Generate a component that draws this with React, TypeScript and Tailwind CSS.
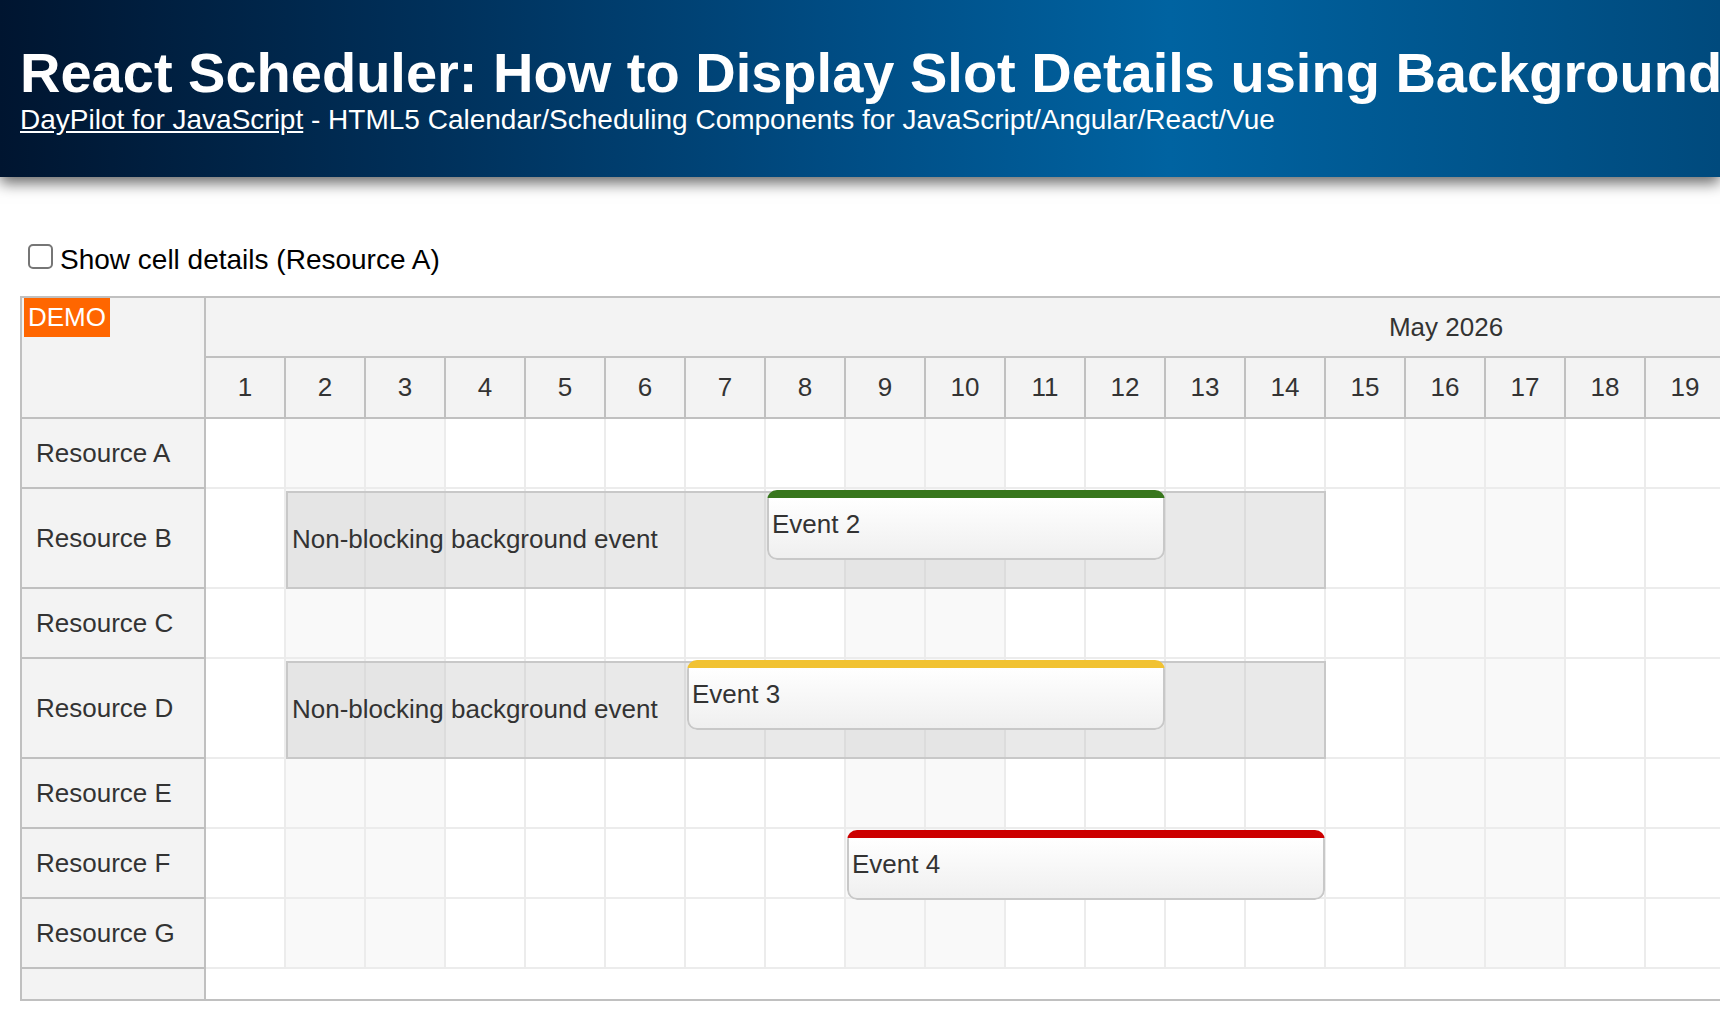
import React from "react";

const DAYS = Array.from({ length: 31 }, (_, i) => i + 1);
const WEEKEND = new Set([2, 3, 9, 10, 16, 17, 23, 24, 30, 31]);

type Ev = { start: number; days: number; color: string; text: string };
type Row = { name: string; h: number; bg?: boolean; ev?: Ev };

const ROWS: Row[] = [
  { name: "Resource A", h: 70 },
  { name: "Resource B", h: 100, bg: true, ev: { start: 8, days: 5, color: "#38761d", text: "Event 2" } },
  { name: "Resource C", h: 70 },
  { name: "Resource D", h: 100, bg: true, ev: { start: 7, days: 6, color: "#f1c232", text: "Event 3" } },
  { name: "Resource E", h: 70 },
  { name: "Resource F", h: 70, ev: { start: 9, days: 6, color: "#cc0000", text: "Event 4" } },
  { name: "Resource G", h: 70 },
];

function EventBox({ ev }: { ev: Ev }) {
  return (
    <div
      className="absolute top-[1px] h-[70px] rounded-[10px] overflow-hidden flex flex-col z-20"
      style={{ left: (ev.start - 1) * 80 + 1, width: ev.days * 80 - 2 }}
    >
      <div className="h-[8px] shrink-0" style={{ backgroundColor: ev.color }} />
      <div className="flex-1 border-2 border-t-0 border-[#c8c8c8] rounded-b-[10px] bg-[linear-gradient(to_bottom,#ffffff,#efefef)] pl-[3px] pt-[11px] text-[26px] leading-[30px] text-[#333333] whitespace-nowrap">
        {ev.text}
      </div>
    </div>
  );
}

export default function App() {
  return (
    <div className="w-full overflow-hidden bg-white font-['Liberation_Sans',Arial,sans-serif]">
      {/* Header */}
      <div className="relative z-10 h-[177px] bg-[linear-gradient(to_right,#001530_0%,#00305a_25%,#004e86_50%,#0063a1_68%,#004a7d_100%)] shadow-[0_6px_14px_rgba(0,0,0,0.6)] pl-[20px] pt-[42px] text-white whitespace-nowrap overflow-hidden">
        <div className="text-[56px] leading-[62px] font-bold">
          React Scheduler: How to Display Slot Details using Background Events
        </div>
        <div className="text-[28px] leading-[32px]">
          <span className="underline">DayPilot for JavaScript</span> - HTML5 Calendar/Scheduling Components for JavaScript/Angular/React/Vue
        </div>
      </div>

      {/* Checkbox */}
      <div className="mt-[67px] pl-[28px] flex items-start text-[28px] leading-[32px] text-black">
        <span className="w-[25px] h-[25px] rounded-[5px] border-2 border-[#767676] bg-white shrink-0" />
        <span className="ml-[7px]">Show cell details (Resource A)</span>
      </div>

      {/* Scheduler */}
      <div className="mt-[20px] ml-[20px] w-[1740px] flex border-l-2 border-t-2 border-b-2 border-[#c0c0c0] text-[#333333] text-[26px]">
        {/* Row headers */}
        <div className="w-[184px] shrink-0 flex flex-col bg-[#f3f3f3]">
          <div className="h-[121px] border-r-2 border-b-2 border-[#c0c0c0]">
            <div className="ml-[2px] inline-block bg-[#ff6600] text-white px-[4px] leading-[39px]">DEMO</div>
          </div>
          {ROWS.map((r) => (
            <div
              key={r.name}
              className="border-r-2 border-b-2 border-[#c0c0c0] flex items-center pl-[14px] whitespace-nowrap"
              style={{ height: r.h }}
            >
              {r.name}
            </div>
          ))}
          <div className="h-[30px] border-r-2 border-[#c0c0c0]" />
        </div>

        {/* Timeline */}
        <div className="flex-1 overflow-hidden flex flex-col">
          <div className="h-[60px] flex bg-[#f3f3f3] border-b-2 border-[#c0c0c0]">
            <div className="w-[2480px] shrink-0 flex items-center justify-center">May 2026</div>
          </div>
          <div className="h-[61px] flex bg-[#f3f3f3] border-b-2 border-[#c0c0c0]">
            {DAYS.map((d) => (
              <div key={d} className="w-[80px] shrink-0 border-r-2 border-[#c0c0c0] flex items-center justify-center">
                {d}
              </div>
            ))}
          </div>
          {ROWS.map((r) => (
            <div key={r.name} className="relative flex shrink-0" style={{ height: r.h }}>
              {DAYS.map((d) => (
                <div
                  key={d}
                  className={
                    "w-[80px] shrink-0 h-full border-r-2 border-b-2 border-[#ececec] " +
                    (WEEKEND.has(d) ? "bg-[#f9f9f9]" : "bg-white")
                  }
                />
              ))}
              {r.bg && (
                <div className="absolute left-[80px] w-[1040px] top-[2px] bottom-0 border-2 border-[#c8c8c8] bg-[rgba(190,190,190,0.34)] flex items-center pl-[4px] pb-[2px] whitespace-nowrap z-10">
                  Non-blocking background event
                </div>
              )}
              {r.ev && <EventBox ev={r.ev} />}
            </div>
          ))}
          <div className="h-[30px] bg-white" />
        </div>
      </div>
    </div>
  );
}
